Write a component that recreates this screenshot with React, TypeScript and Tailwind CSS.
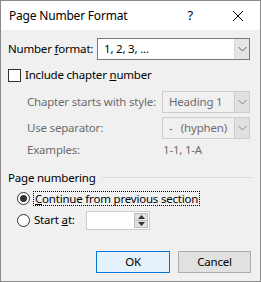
import React from "react";

function Chevron({ color = "#606060" }: { color?: string }) {
  return (
    <svg width="9" height="6" viewBox="0 0 9 6">
      <path d="M0.5 1 L4.5 5 L8.5 1" fill="none" stroke={color} strokeWidth="1" />
    </svg>
  );
}

function Select({ value, disabled }: { value: string; disabled?: boolean }) {
  return (
    <div
      className={
        "flex h-full w-full items-stretch border " +
        (disabled ? "border-[#cccccc] bg-[#f0f0f0] text-[#6d6d6d]" : "border-[#7a7a7a] bg-white text-black")
      }
    >
      <div className="flex flex-1 items-center whitespace-pre pl-[6px]">{value}</div>
      <div
        className={
          "flex w-[15px] items-center justify-center border-l " +
          (disabled ? "border-[#cccccc] bg-[#e0e0e0]" : "border-[#dadada] bg-[#e5e5e5]")
        }
      >
        <Chevron color={disabled ? "#8a8a8a" : "#606060"} />
      </div>
    </div>
  );
}

function Radio({ checked }: { checked?: boolean }) {
  return (
    <div className="flex h-[13px] w-[13px] shrink-0 items-center justify-center rounded-full border border-[#333333] bg-white">
      {checked && <div className="h-[7px] w-[7px] rounded-full bg-[#333333]" />}
    </div>
  );
}

export default function App() {
  return (
    <div
      className="flex h-[282px] w-[261px] flex-col whitespace-nowrap border border-[#8a8a8a] bg-[#f0f0f0] text-[11.5px] leading-none tracking-[-0.2px] text-black"
      style={{ fontFamily: '"Noto Sans", "Open Sans", sans-serif' }}
    >
      {/* title bar */}
      <div className="flex h-[29px] shrink-0 items-center bg-white pl-[8px]">
        <span className="text-[12px]">Page Number Format</span>
        <span className="ml-auto mr-[40px] text-[13px]">?</span>
        <svg className="mr-[17px]" width="10" height="10" viewBox="0 0 10 10">
          <path d="M0 0 L10 10 M10 0 L0 10" stroke="#000" strokeWidth="1" />
        </svg>
      </div>

      <div className="flex flex-col px-[7px]">
        {/* number format */}
        <div className="mt-[8px] flex h-[22px] items-center">
          <span className="w-[89px]">
            Number <span className="underline">f</span>ormat:
          </span>
          <div className="h-full w-[153px]">
            <Select value="1, 2, 3, ..." />
          </div>
        </div>

        {/* include chapter */}
        <div className="mt-[8px] flex h-[14px] items-center gap-[4px]">
          <div className="h-[13px] w-[13px] border border-[#333333] bg-white" />
          <span>
            Include chapter <span className="underline">n</span>umber
          </span>
        </div>

        <div className="mt-[9px] flex h-[22px] items-center text-[#6d6d6d]">
          <span className="w-[154px] pl-[19px]">Chapter starts with style:</span>
          <div className="h-full w-[88px]">
            <Select value="Heading 1" disabled />
          </div>
        </div>
        <div className="mt-[4px] flex h-[22px] items-center text-[#6d6d6d]">
          <span className="w-[154px] pl-[19px]">Use separator:</span>
          <div className="h-full w-[88px]">
            <Select value="-   (hyphen)" disabled />
          </div>
        </div>
        <div className="mt-[4px] flex h-[14px] items-center text-[#6d6d6d]">
          <span className="w-[155px] pl-[19px]">Examples:</span>
          <span>1-1, 1-A</span>
        </div>

        {/* page numbering */}
        <div className="mt-[15px] flex items-center gap-[6px]">
          <span>Page numbering</span>
          <div className="h-px flex-1 bg-[#dcdcdc]" />
        </div>
        <div className="mt-[7px] flex h-[16px] items-center gap-[3px] pl-[9px]">
          <Radio checked />
          <span className="border border-dotted border-black px-px py-[1px]">
            <span className="underline">C</span>ontinue from previous section
          </span>
        </div>
        <div className="mt-[4px] flex h-[19px] items-center pl-[9px]">
          <Radio />
          <span className="ml-[4px] w-[52px]">
            Start <span className="underline">a</span>t:
          </span>
          <div className="flex h-full w-[64px] border border-[#cccccc] bg-white">
            <div className="flex-1" />
            <div className="my-px mr-px flex w-[14px] flex-col border border-[#bdbdbd] bg-[#e1e1e1]">
              <div className="flex flex-1 items-center justify-center border-b border-[#bdbdbd]">
                <svg width="7" height="4" viewBox="0 0 7 4">
                  <path d="M0 4 L3.5 0 L7 4 Z" fill="#333" />
                </svg>
              </div>
              <div className="flex flex-1 items-center justify-center">
                <svg width="7" height="4" viewBox="0 0 7 4">
                  <path d="M0 0 L3.5 4 L7 0 Z" fill="#333" />
                </svg>
              </div>
            </div>
          </div>
        </div>

        {/* buttons */}
        <div className="mt-[21px] flex justify-end gap-[8px] pr-[2px]">
          <button className="flex h-[22px] w-[74px] items-center justify-center border border-[#0078d7] bg-[#e5f1fb]">
            OK
          </button>
          <button className="flex h-[22px] w-[73px] items-center justify-center border border-[#adadad] bg-[#e1e1e1]">
            Cancel
          </button>
        </div>
      </div>
    </div>
  );
}
